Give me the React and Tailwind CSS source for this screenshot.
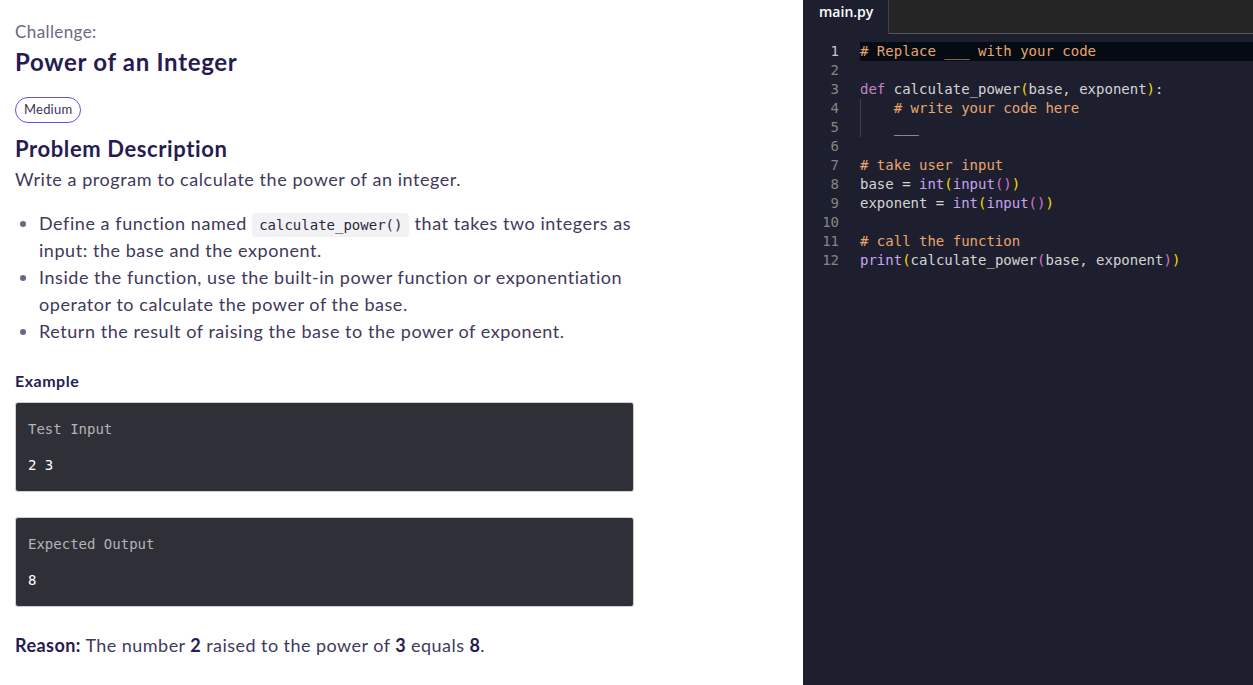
import React from "react";

const sans = { fontFamily: "Lato, 'Noto Sans', sans-serif" };
const mono = { fontFamily: "'DejaVu Sans Mono', 'Liberation Mono', monospace" };

const C = {
  cm: "text-[#e8a56f]",
  kw: "text-[#c586c0]",
  fn: "text-[#c9a3f0]",
  tx: "text-[#d4d4d4]",
  p1: "text-[#ffd700]",
  p2: "text-[#da70d6]",
};

const lines = [
  [[C.cm, "# Replace ___ with your code"]],
  [],
  [[C.kw, "def"], [C.tx, " calculate_power"], [C.p1, "("], [C.tx, "base, exponent"], [C.p1, ")"], [C.tx, ":"]],
  [[C.tx, "    "], [C.cm, "# write your code here"]],
  [[C.tx, "    ___"]],
  [],
  [[C.cm, "# take user input"]],
  [[C.tx, "base = "], [C.fn, "int"], [C.p1, "("], [C.fn, "input"], [C.p2, "()"], [C.p1, ")"]],
  [[C.tx, "exponent = "], [C.fn, "int"], [C.p1, "("], [C.fn, "input"], [C.p2, "()"], [C.p1, ")"]],
  [],
  [[C.cm, "# call the function"]],
  [[C.fn, "print"], [C.p1, "("], [C.tx, "calculate_power"], [C.p2, "("], [C.tx, "base, exponent"], [C.p2, ")"], [C.p1, ")"]],
];

function Box({ label, value }) {
  return (
    <div className="bg-[#2f3037] border border-[#ccd0d8] rounded-[3px] px-[12px] py-[16px]" style={mono}>
      <div className="text-[14px] leading-[20px] text-[#b3b3b8]">{label}</div>
      <div className="text-[14px] leading-[20px] text-white mt-[16px]">{value}</div>
    </div>
  );
}

export default function App() {
  return (
    <div className="flex w-[1253px] h-[685px] overflow-hidden bg-white">
      <div className="w-[803px] shrink-0 pl-[15px] pt-[20px]" style={sans}>
        <div className="w-[619px]">
          <div className="text-[17px] leading-[24px] tracking-[0.4px] text-[#6d6786]">Challenge:</div>
          <h1 className="mt-[2px] text-[24px] leading-[32px] tracking-[0.7px] font-bold text-[#261c52]">Power of an Integer</h1>
          <div className="mt-[19px] inline-flex items-center h-[26px] px-[8px] rounded-full border border-[#5a55e6] text-[13px] tracking-[0.2px] text-[#3a3358]">
            Medium
          </div>
          <h2 className="mt-[12px] text-[22px] leading-[28px] tracking-[0.6px] font-bold text-[#261c52]">Problem Description</h2>
          <p className="mt-[3px] text-[18px] leading-[27px] tracking-[0.55px] text-[#3f395c]">Write a program to calculate the power of an integer.</p>
          <ul className="mt-[17px] list-disc pl-[24px] text-[18px] leading-[27px] tracking-[0.55px] text-[#3f395c] marker:text-[#6b6785]">
            <li>
              Define a function named{" "}
              <code className="bg-[#f2f2f4] rounded-[4px] px-[7px] py-[4px] text-[14px] leading-[1] tracking-normal text-[#2b2640]" style={mono}>calculate_power()</code>{" "}
              that takes two integers as input: the base and the exponent.
            </li>
            <li>Inside the function, use the built-in power function or exponentiation operator to calculate the power of the base.</li>
            <li>Return the result of raising the base to the power of exponent.</li>
          </ul>
          <div className="mt-[24px] text-[16px] leading-[24px] tracking-[0.5px] font-bold text-[#261c52]">Example</div>
          <div className="mt-[9px]">
            <Box label="Test Input" value="2 3" />
          </div>
          <div className="mt-[25px]">
            <Box label="Expected Output" value="8" />
          </div>
          <p className="mt-[25px] text-[18px] leading-[27px] tracking-[0.45px] text-[#3f395c]">
            <b className="text-[#261c52]">Reason:</b> The number <b className="text-[#261c52]">2</b> raised to the power of{" "}
            <b className="text-[#261c52]">3</b> equals <b className="text-[#261c52]">8</b>.
          </p>
        </div>
      </div>

      <div className="flex-1 flex flex-col bg-[#1e1f2e]">
        <div className="flex h-[34px] shrink-0">
          <div className="w-[85px] pt-[2px] pl-[16px] text-[14px] leading-[20px] font-semibold text-white bg-[#1e1f2e]" style={{ fontFamily: "'Open Sans', sans-serif" }}>
            main.py
          </div>
          <div className="flex-1 bg-[#252526] border-l border-[#3f3f46] border-b border-b-[#555558]"></div>
        </div>
        <div className="pt-[8px]" style={mono}>
          {lines.map((l, i) => (
            <div key={i} className="flex h-[19px] items-center text-[14px] leading-[19px]">
              <div className={`w-[36px] text-right shrink-0 ${i === 0 ? "text-[#c6c6c6]" : "text-[#858585]"}`}>{i + 1}</div>
              <div className={`ml-[21px] flex-1 h-[19px] whitespace-pre relative ${i === 0 ? "bg-[#050b13]" : ""}`}>
                {(i === 3 || i === 4) && (
                  <span className="absolute left-0 top-0 bottom-0 w-px bg-[#404050]"></span>
                )}
                {l.map(([c, t], j) => (
                  <span key={j} className={c}>{t}</span>
                ))}
              </div>
            </div>
          ))}
        </div>
      </div>
    </div>
  );
}
